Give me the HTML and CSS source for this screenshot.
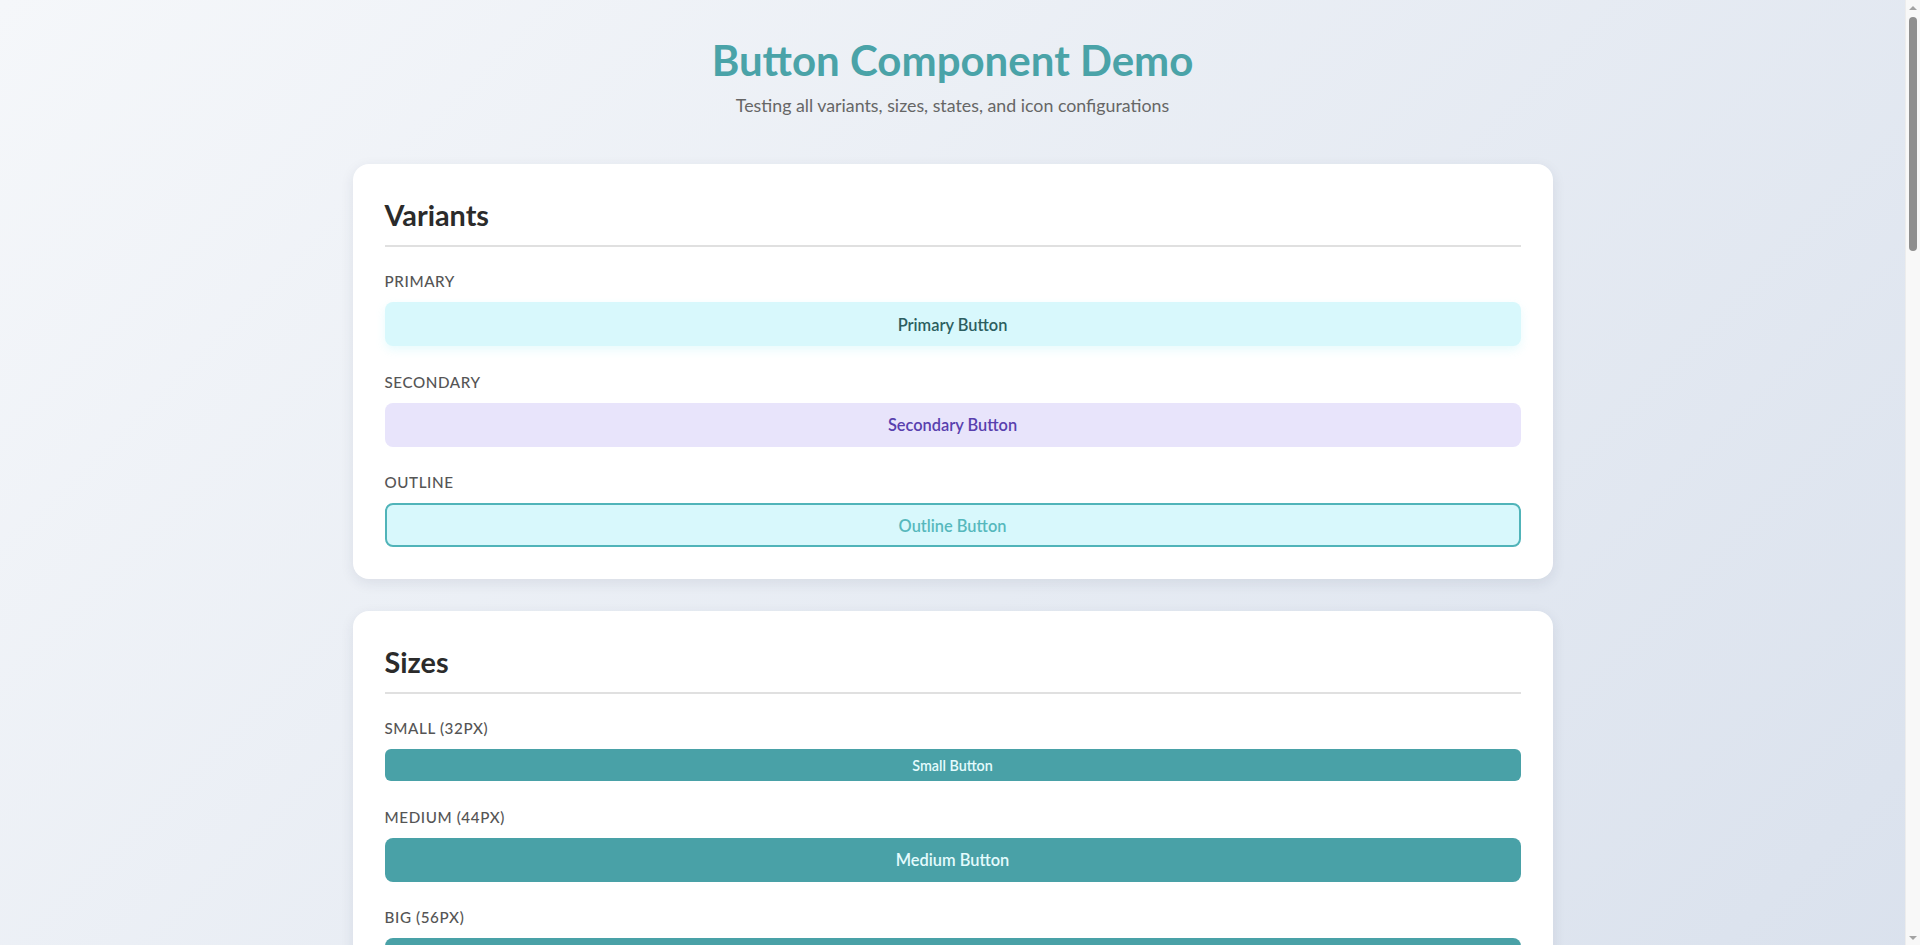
FILE: index.html
```html
<!DOCTYPE html>
<html lang="en">
<head>
<meta charset="utf-8">
<title>Button Component Demo</title>
<link rel="stylesheet" href="styles.css">
</head>
<body>
<div class="container">
  <header class="header">
    <h1 class="title">Button Component Demo</h1>
    <p class="subtitle">Testing all variants, sizes, states, and icon configurations</p>
  </header>

  <section class="card">
    <h2 class="card-title">Variants</h2>
    <div class="groups">
      <div class="group">
        <div class="label">Primary</div>
        <button class="btn btn-md btn-primary">Primary Button</button>
      </div>
      <div class="group">
        <div class="label">Secondary</div>
        <button class="btn btn-md btn-secondary">Secondary Button</button>
      </div>
      <div class="group">
        <div class="label">Outline</div>
        <button class="btn btn-md btn-outline">Outline Button</button>
      </div>
    </div>
  </section>

  <section class="card">
    <h2 class="card-title">Sizes</h2>
    <div class="groups">
      <div class="group">
        <div class="label">Small (32px)</div>
        <button class="btn btn-sm btn-solid">Small Button</button>
      </div>
      <div class="group">
        <div class="label">Medium (44px)</div>
        <button class="btn btn-md btn-solid">Medium Button</button>
      </div>
      <div class="group">
        <div class="label">Big (56px)</div>
        <button class="btn btn-lg btn-solid">Big Button</button>
      </div>
    </div>
  </section>

  <section class="card">
    <h2 class="card-title">States</h2>
    <div class="groups">
      <div class="group">
        <div class="label">Default</div>
        <button class="btn btn-md btn-solid">Default Button</button>
      </div>
      <div class="group">
        <div class="label">Disabled</div>
        <button class="btn btn-md btn-solid is-disabled" disabled>Disabled Button</button>
      </div>
      <div class="group">
        <div class="label">Loading</div>
        <button class="btn btn-md btn-solid"><span class="spinner"></span>Loading...</button>
      </div>
      <div class="group">
        <div class="label">Disabled Outline</div>
        <button class="btn btn-md btn-outline is-disabled" disabled>Disabled Outline</button>
      </div>
    </div>
  </section>

  <section class="card">
    <h2 class="card-title">Icons</h2>
    <div class="groups">
      <div class="group">
        <div class="label">Left Icon</div>
        <button class="btn btn-md btn-solid">
          <svg class="icon" viewBox="0 0 24 24"><path d="M12 5v14M5 12h14"/></svg>Add Item
        </button>
      </div>
      <div class="group">
        <div class="label">Right Icon</div>
        <button class="btn btn-md btn-primary">Continue
          <svg class="icon" viewBox="0 0 24 24"><path d="M5 12h14M13 6l6 6-6 6"/></svg>
        </button>
      </div>
      <div class="group">
        <div class="label">Both Icons</div>
        <button class="btn btn-md btn-secondary">
          <svg class="icon" viewBox="0 0 24 24"><path d="M20 6L9 17l-5-5"/></svg>Confirm
          <svg class="icon" viewBox="0 0 24 24"><path d="M9 6l6 6-6 6"/></svg>
        </button>
      </div>
      <div class="group">
        <div class="label">Icon Only</div>
        <div class="row">
          <button class="btn btn-md btn-solid btn-icon" aria-label="Search">
            <svg class="icon" viewBox="0 0 24 24"><circle cx="11" cy="11" r="7"/><path d="M20 20l-4-4"/></svg>
          </button>
          <button class="btn btn-md btn-outline btn-icon" aria-label="Close">
            <svg class="icon" viewBox="0 0 24 24"><path d="M6 6l12 12M18 6L6 18"/></svg>
          </button>
        </div>
      </div>
    </div>
  </section>

  <section class="card">
    <h2 class="card-title">Combinations</h2>
    <div class="groups">
      <div class="group">
        <div class="label">Primary Small</div>
        <button class="btn btn-sm btn-primary">Primary Small</button>
      </div>
      <div class="group">
        <div class="label">Secondary Small</div>
        <button class="btn btn-sm btn-secondary">Secondary Small</button>
      </div>
      <div class="group">
        <div class="label">Outline Small</div>
        <button class="btn btn-sm btn-outline">Outline Small</button>
      </div>
      <div class="group">
        <div class="label">Primary Big</div>
        <button class="btn btn-lg btn-primary">Primary Big</button>
      </div>
      <div class="group">
        <div class="label">Secondary Big</div>
        <button class="btn btn-lg btn-secondary">Secondary Big</button>
      </div>
      <div class="group">
        <div class="label">Outline Big</div>
        <button class="btn btn-lg btn-outline">Outline Big</button>
      </div>
    </div>
  </section>

  <section class="card">
    <h2 class="card-title">Interactive</h2>
    <div class="groups">
      <div class="group">
        <div class="label">Click Counter</div>
        <button class="btn btn-md btn-solid">Clicked 0 times</button>
      </div>
      <div class="group">
        <div class="label">Toggle</div>
        <button class="btn btn-md btn-outline">Toggle Off</button>
      </div>
      <div class="group">
        <div class="label">Async Action</div>
        <button class="btn btn-md btn-secondary">Start Action</button>
      </div>
    </div>
  </section>
</div>

<div class="scrollbar" aria-hidden="true">
  <div class="sb-arrow sb-up"></div>
  <div class="sb-track"><div class="sb-thumb"></div></div>
  <div class="sb-arrow sb-down"></div>
</div>
</body>
</html>
```

FILE: styles.css
```css
html, body {
  margin: 0;
  padding: 0;
}

body {
  font-family: Lato, "Open Sans", "DejaVu Sans", sans-serif;
  background: linear-gradient(135deg, #f5f7fa 0%, #c3cfe2 100%);
  min-height: 100vh;
  padding-right: 15px;
  color: #2b2b2b;
}

.container {
  max-width: 1200px;
  margin: 0 auto;
  padding: 36px 0 60px;
}

.header {
  text-align: center;
  margin-bottom: 47px;
}

.title {
  margin: 0 0 9px;
  font-size: 42px;
  line-height: 48px;
  font-weight: 700;
  color: #4aa3a8;
}

.subtitle {
  margin: 0;
  font-size: 17.8px;
  line-height: 24px;
  color: #666666;
}

.card {
  background: #ffffff;
  border-radius: 16px;
  padding: 32px;
  margin-bottom: 32px;
  box-shadow: 0 4px 14px rgba(30, 45, 80, 0.09);
}

.card-title {
  margin: 0 0 24px;
  padding-bottom: 11px;
  border-bottom: 2px solid #e0e0e0;
  font-size: 28.8px;
  line-height: 38px;
  font-weight: 700;
  color: #2b2b2b;
}

.groups {
  display: flex;
  flex-direction: column;
  gap: 25.6px;
}

.label {
  font-size: 15.2px;
  line-height: 20px;
  margin-bottom: 11px;
  font-weight: 500;
  letter-spacing: 0.6px;
  text-transform: uppercase;
  color: #555555;
}

.btn {
  display: flex;
  align-items: center;
  justify-content: center;
  gap: 8px;
  width: 100%;
  border: none;
  border-radius: 8px;
  font-family: inherit;
  font-weight: 600;
  cursor: pointer;
  padding: 0 16px;
  box-sizing: border-box;
}

.btn-sm { height: 32px; font-size: 14.3px; border-radius: 6px; }
.btn-md { height: 44px; font-size: 16.4px; }
.btn-lg { height: 56px; font-size: 19px; }

.btn-primary {
  background: #d8f8fc;
  color: #2c5e60;
  box-shadow: 0 4px 10px rgba(150, 235, 245, 0.22);
}

.btn-secondary {
  background: #e8e4fb;
  color: #5840ae;
}

.btn-outline {
  background: #d8f8fc;
  color: #56b8bd;
  border: 2px solid #50b4b9;
}

.btn-solid {
  background: #49a1a7;
  color: #e4fbfd;
}

.is-disabled {
  opacity: 0.5;
  cursor: not-allowed;
}

.row {
  display: flex;
  gap: 12px;
}

.btn-icon {
  width: 44px;
  padding: 0;
}

.icon {
  width: 18px;
  height: 18px;
  fill: none;
  stroke: currentColor;
  stroke-width: 2;
  stroke-linecap: round;
  stroke-linejoin: round;
}

.spinner {
  width: 14px;
  height: 14px;
  border: 2px solid rgba(255, 255, 255, 0.4);
  border-top-color: #ffffff;
  border-radius: 50%;
}

/* classic scrollbar drawn over the right edge */
.scrollbar {
  position: fixed;
  top: 0;
  right: 0;
  width: 15px;
  height: 100vh;
  display: flex;
  flex-direction: column;
  background: #f8f8f8;
  border-left: 1px solid #ededed;
  box-sizing: border-box;
}

.sb-arrow {
  height: 15px;
  display: flex;
  align-items: center;
  justify-content: center;
}

.sb-up::before,
.sb-down::before {
  content: "";
  width: 0;
  height: 0;
  border-left: 4px solid transparent;
  border-right: 4px solid transparent;
}

.sb-up::before { border-bottom: 4px solid #a3a3a3; }
.sb-down::before { border-top: 4px solid #a3a3a3; }

.sb-track {
  flex: 1;
  display: flex;
  justify-content: center;
  padding-top: 2px;
}

.sb-thumb {
  width: 8px;
  height: 234px;
  border-radius: 4px;
  background: #8f8f8f;
}
```
